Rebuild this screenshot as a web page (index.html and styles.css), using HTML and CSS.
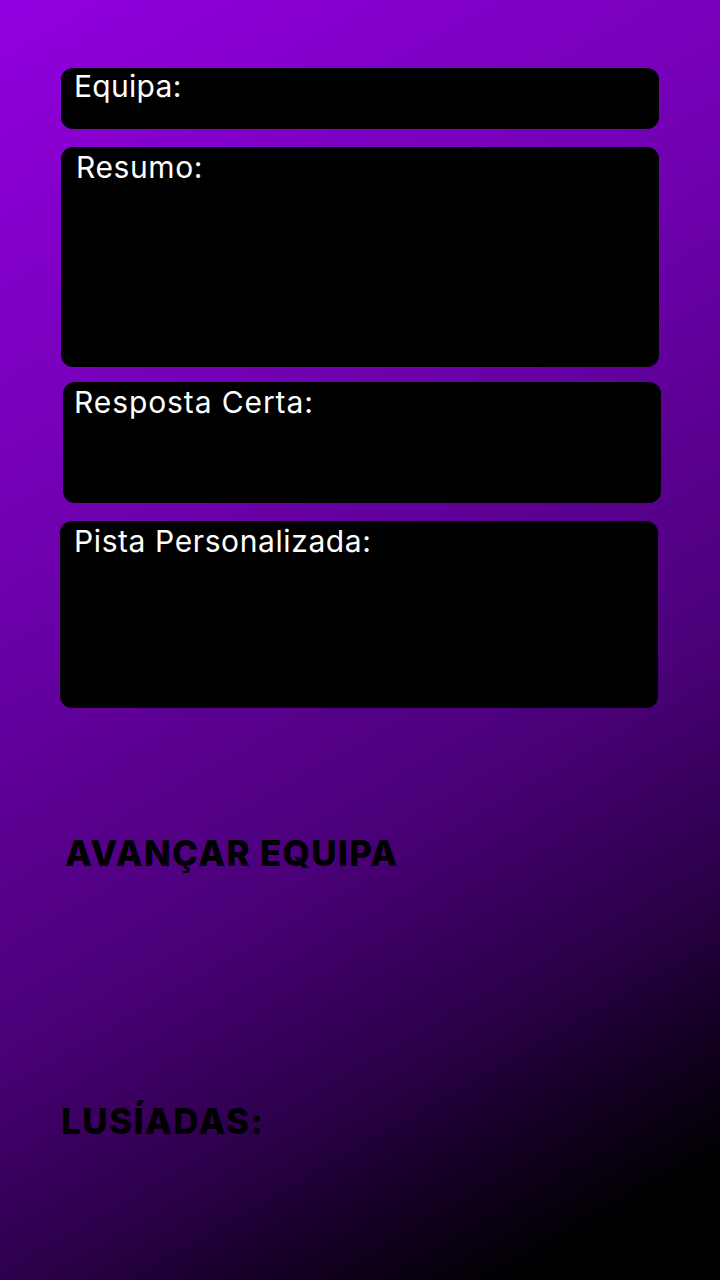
FILE: index.html
```html
<!DOCTYPE html>
<html lang="pt">
<head>
<meta charset="utf-8">
<title>Equipa</title>
<link rel="stylesheet" href="styles.css">
</head>
<body>
<main class="screen">
  <section class="fields">
    <div class="field field-team"><span class="label">Equipa:</span></div>
    <div class="field field-summary"><span class="label">Resumo:</span></div>
    <div class="field field-answer"><span class="label">Resposta Certa:</span></div>
    <div class="field field-hint"><span class="label">Pista Personalizada:</span></div>
  </section>
  <div class="action">AVANÇAR EQUIPA</div>
  <div class="footer-title">LUSÍADAS:</div>
</main>
</body>
</html>
```
FILE: styles.css
```css
html, body {
  margin: 0;
  padding: 0;
  height: 100%;
}
body {
  background: linear-gradient(150deg, #9200e0 0%, #7a00bd 24%, #6a00a8 38%, #4a0078 62%, #2c004a 76%, #0e001a 87%, #000 93%, #000 100%);
  font-family: Inter, "Noto Sans", sans-serif;
  min-height: 1280px;
}
.screen {
  display: flex;
  flex-direction: column;
  padding: 68px 0 0 0;
}
.fields {
  display: flex;
  flex-direction: column;
  gap: 18px;
}
.field {
  background: #000;
  border-radius: 12px;
  width: 598px;
  box-sizing: border-box;
  padding: 5px 0 0 14px;
  color: #fff;
}
.label {
  font-size: 30px;
  line-height: 30px;
  display: block;
  letter-spacing: 0.6px;
}
.field-team { margin-left: 61px; height: 61px; padding-top: 3px; padding-left: 13px; }
.field-team .label { letter-spacing: 0.3px; }
.field-summary { margin-left: 61px; height: 220px; padding-left: 15px; }
.field-answer { margin-left: 63px; height: 121px; margin-top: -3px; padding-left: 11px; }
.field-answer .label { letter-spacing: 0.9px; }
.field-hint { margin-left: 60px; height: 187px; padding-left: 14px; }
.action {
  margin: 128px 0 0 65px;
  font-size: 35px;
  line-height: 34px;
  font-weight: 800;
  color: #000;
  letter-spacing: 1.3px;
}
.footer-title {
  margin: 234px 0 0 61px;
  font-size: 35px;
  line-height: 35px;
  font-weight: 800;
  color: #000;
  letter-spacing: 1.4px;
}
```
